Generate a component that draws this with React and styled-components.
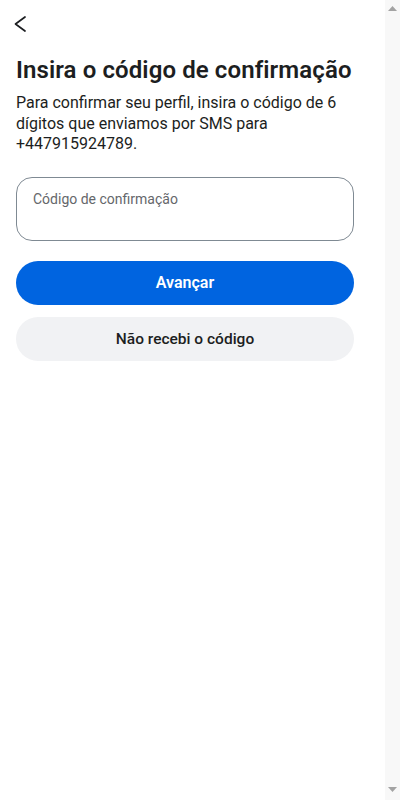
import React from 'react';
import styled, { createGlobalStyle } from 'styled-components';

const GlobalStyle = createGlobalStyle`
	body {
		margin: 0;
		background: #ffffff;
		font-family: Roboto, "Liberation Sans", sans-serif;
		color: #1c1e21;
	}
`;

const Page = styled.div`
	display: flex;
	flex-direction: column;
	width: 338px;
	padding: 12px 16px 0;
`;

// the empty browser scrollbar seen at the right edge of the shot
const ScrollRail = styled.div`
	position: fixed;
	top: 0;
	right: 0;
	bottom: 0;
	width: 15px;
	display: flex;
	flex-direction: column;
	justify-content: space-between;
	align-items: center;
	padding: 6px 0 8px;
	box-sizing: border-box;
	background: #f8f8f8;
	color: #a3a3a3;
`;

const BackButton = styled.button`
	display: flex;
	align-items: center;
	width: 24px;
	height: 24px;
	padding: 0;
	margin: 0 0 19px -2px;
	border: none;
	background: none;
	color: #1c1e21;
	cursor: pointer;
`;

const Title = styled.h1`
	margin: 0 0 8px;
	font-size: 24px;
	font-weight: 600;
	line-height: 30px;
	letter-spacing: 0.1px;
	color: #1c1e21;
`;

const Lead = styled.p`
	margin: 0 0 22px;
	font-size: 16px;
	line-height: 20.5px;
	color: #1c1e21;
`;

const Field = styled.label`
	display: flex;
	flex-direction: column;
	height: 64px;
	box-sizing: border-box;
	padding: 12px 16px;
	border: 1px solid #7f8a93;
	border-radius: 16px;
	margin-bottom: 20px;
`;

const FieldLabel = styled.span`
	font-size: 14px;
	line-height: 18px;
	color: #65676b;
`;

const Button = styled.button`
	height: 44px;
	border: none;
	border-radius: 22px;
	margin-bottom: 12px;
	font-family: inherit;
	font-size: ${({ primary }) => (primary ? '16px' : '15.5px')};
	font-weight: ${({ primary }) => (primary ? 600 : 500)};
	background: ${({ primary }) => (primary ? '#0064e0' : '#f1f2f4')};
	color: ${({ primary }) => (primary ? '#ffffff' : '#1c1e21')};
	cursor: pointer;
`;

const Arrow = ({ down }) => (
	<svg width="9" height="5" viewBox="0 0 9 5">
		<polygon points={down ? '0,0 9,0 4.5,5' : '4.5,0 9,5 0,5'} fill="currentColor" />
	</svg>
);

const App = () => (
	<>
		<GlobalStyle />
		<Page>
			<BackButton aria-label="Voltar">
				<svg width="24" height="24" viewBox="0 0 24 24" fill="none">
					<path d="M11 5L1.5 12L11 19" stroke="currentColor" strokeWidth="1.7" strokeLinecap="round" strokeLinejoin="round" />
				</svg>
			</BackButton>
			<Title>Insira o código de confirmação</Title>
			<Lead>
				Para confirmar seu perfil, insira o código de 6 dígitos que enviamos por SMS para +447915924789.
			</Lead>
			<Field>
				<FieldLabel>Código de confirmação</FieldLabel>
			</Field>
			<Button primary>Avançar</Button>
			<Button>Não recebi o código</Button>
		</Page>
		<ScrollRail>
			<Arrow />
			<Arrow down />
		</ScrollRail>
	</>
);

export default App;
